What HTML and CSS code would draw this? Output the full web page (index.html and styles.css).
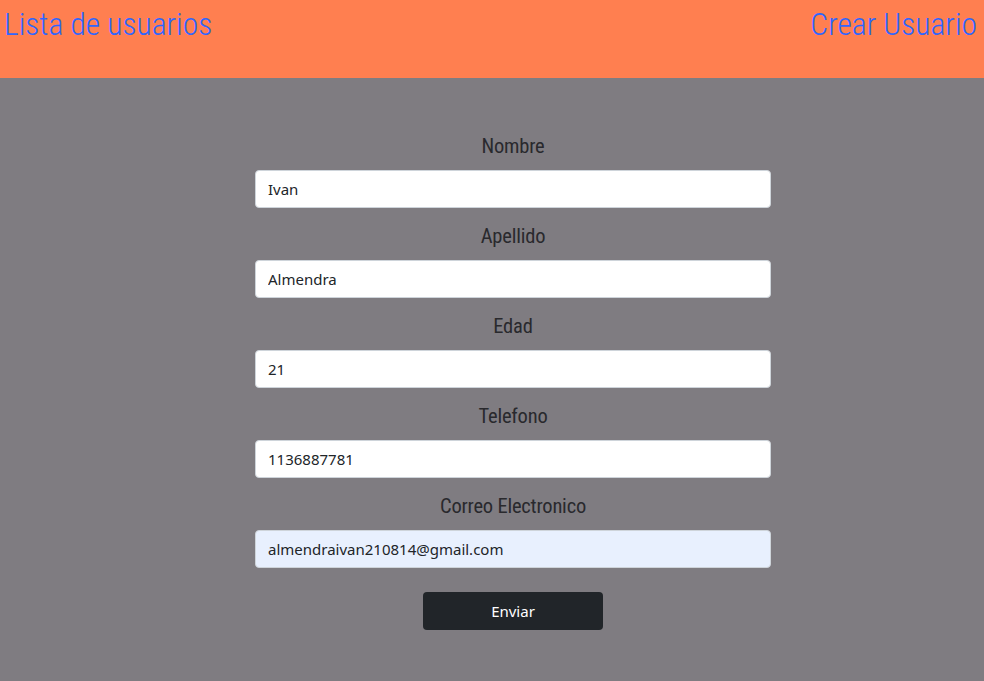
FILE: index.html
```html
<!DOCTYPE html>
<html lang="es">
<head>
<meta charset="utf-8">
<title>Usuarios</title>
<link rel="stylesheet" href="styles.css">
</head>
<body>
<header class="topbar">
  <a class="nav-link" href="#">Lista de usuarios</a>
  <a class="nav-link" href="#">Crear Usuario</a>
</header>
<main class="page">
  <form class="user-form">
    <label class="field-label" for="nombre">Nombre</label>
    <input class="field-input" id="nombre" type="text" value="Ivan">
    <label class="field-label" for="apellido">Apellido</label>
    <input class="field-input" id="apellido" type="text" value="Almendra">
    <label class="field-label" for="edad">Edad</label>
    <input class="field-input" id="edad" type="text" value="21">
    <label class="field-label" for="telefono">Telefono</label>
    <input class="field-input" id="telefono" type="text" value="1136887781">
    <label class="field-label" for="correo">Correo Electronico</label>
    <input class="field-input autofilled" id="correo" type="text" value="almendraivan210814@gmail.com">
    <button class="submit-btn" type="button">Enviar</button>
  </form>
</main>
</body>
</html>
```
FILE: styles.css
```css
* { box-sizing: border-box; }
html, body { margin: 0; height: 100%; }
body {
  background: #7f7c81;
  font-family: "Noto Sans", "Open Sans", sans-serif;
  display: flex;
  flex-direction: column;
}
.topbar {
  background: #ff7f50;
  height: 78px;
  display: flex;
  justify-content: space-between;
  align-items: flex-start;
  padding: 6px 7px 0 4px;
}
.nav-link {
  font-family: "Roboto Condensed", "Liberation Sans Narrow", "DejaVu Sans Condensed", sans-serif;
  font-weight: 300;
  font-size: 31.5px;
  line-height: 38px;
  color: #2e66ff;
  text-decoration: none;
}
.page {
  flex: 1;
  display: flex;
  justify-content: center;
  padding: 40px 0 0 42px;
}
.user-form {
  width: 516px;
  display: flex;
  flex-direction: column;
  align-items: stretch;
}
.field-label {
  font-family: "Roboto Condensed", "Liberation Sans Narrow", "DejaVu Sans Condensed", sans-serif;
  font-size: 20.5px;
  letter-spacing: -0.2px;
  line-height: 24px;
  color: #29292d;
  text-align: center;
  margin: 16px 0 12px;
}
.field-input {
  height: 38px;
  border: 1px solid #ced4da;
  border-radius: 4px;
  background: #fff;
  padding: 0 12px;
  font-family: "Noto Sans", "Open Sans", sans-serif;
  font-size: 15px;
  color: #212529;
}
.field-input.autofilled { background: #e8f0fe; }
.submit-btn {
  align-self: center;
  width: 180px;
  height: 38px;
  margin-top: 24px;
  background: #212529;
  color: #fff;
  border: none;
  border-radius: 4px;
  font-family: "Noto Sans", "Open Sans", sans-serif;
  font-size: 15px;
}
```
